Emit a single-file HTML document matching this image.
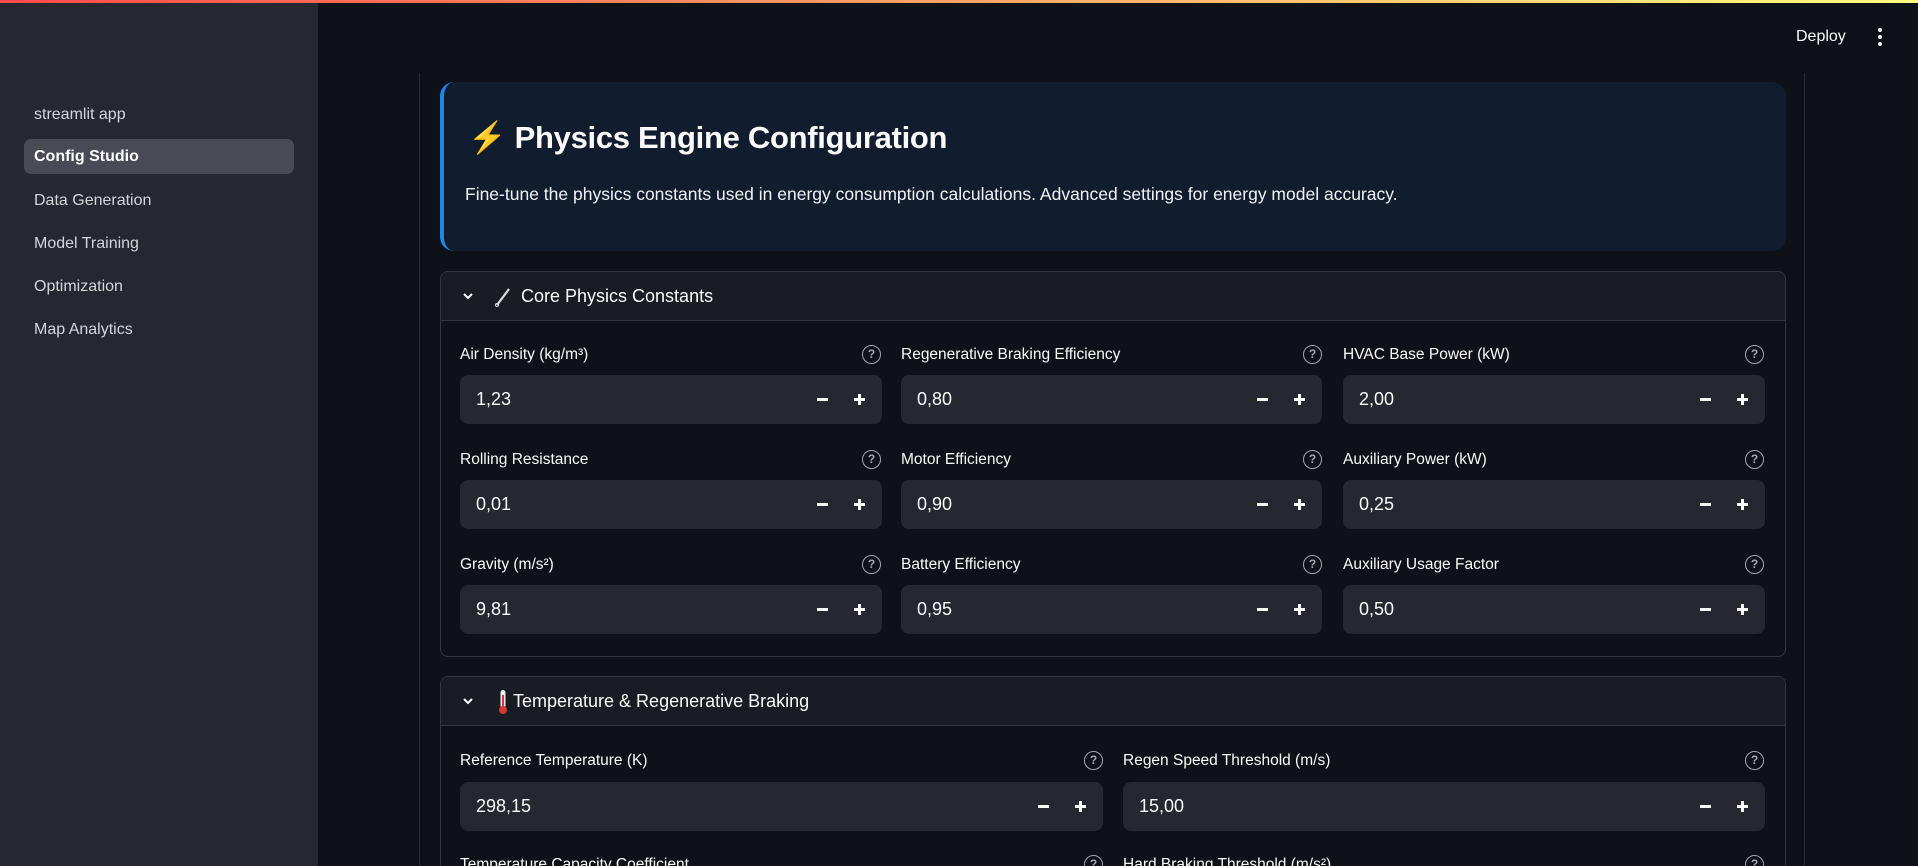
<!DOCTYPE html>
<html><head><meta charset="utf-8"><style>
*{box-sizing:border-box;margin:0;padding:0}
html,body{width:1918px;height:866px;overflow:hidden}
body{background:#0e1117;font-family:"Liberation Sans",sans-serif;color:#fafafa}
#w{position:relative;width:1918px;height:866px;overflow:hidden}
.topbar{position:absolute;left:0;top:0;width:1918px;height:3px;background:linear-gradient(90deg,#ff4b4b,#fffd80)}
.side{position:absolute;left:0;top:3px;width:318px;height:863px;background:#262730}
.nav{position:absolute;left:24px;width:270px;height:35px;line-height:35px;padding-left:10px;font-size:16px;color:#d5d6da;border-radius:7px}
.nav.act{background:#484a55;color:#fff;font-weight:bold}
.deploy{position:absolute;left:1796px;top:28px;font-size:16px}
.kebab{position:absolute;left:1878px;top:28px;width:4px}
.kebab i{display:block;width:4px;height:4px;border-radius:2px;background:#fafafa;margin-bottom:3px}
.vl{position:absolute;top:73px;width:1px;height:793px;background:#2b2d35}
.hdr{position:absolute;left:440px;top:82px;width:1346px;height:169px;background:#111d2e;border-radius:14px;border-left:4px solid #1e88e5}
.hdr h1{position:absolute;left:24px;top:37px;font-size:31px;font-weight:bold;letter-spacing:-0.3px}
.hdr p{position:absolute;left:21px;top:102px;font-size:17.5px;color:#f0f2f6}
.exp{position:absolute;left:440px;width:1346px;border:1px solid #34363e;border-radius:8px;overflow:hidden}
.exph{height:49px;background:#1a1c23;border-bottom:1px solid #34363e;position:relative;font-size:18px}
.exph span{position:absolute;left:80px;top:14px}
.chev{position:absolute;left:20px;top:17px}
.lbl{position:absolute;font-size:15.5px;color:#fafafa}
.q{position:absolute;width:19px;height:19px;border:1.5px solid #a3a8b4;border-radius:50%;font-size:12px;line-height:16px;text-align:center;color:#a3a8b4;font-weight:bold}
.inp{position:absolute;height:49px;background:#262730;border-radius:8px;font-size:18px}
.inp .v{position:absolute;left:16px;top:14px}
.inp .m{position:absolute;right:54px;top:23px;width:11px;height:2.5px;background:#fafafa}
.inp .p1{position:absolute;right:17px;top:23px;width:11px;height:2.5px;background:#fafafa}
.inp .p2{position:absolute;right:21.5px;top:18.5px;width:2.5px;height:11px;background:#fafafa}
</style></head><body><div id="w">
<div class="topbar"></div>
<div class="side">
<div class="nav" style="top:94px">streamlit app</div>
<div class="nav act" style="top:136px">Config Studio</div>
<div class="nav" style="top:180px">Data Generation</div>
<div class="nav" style="top:223px">Model Training</div>
<div class="nav" style="top:266px">Optimization</div>
<div class="nav" style="top:309px">Map Analytics</div>
</div>
<div class="deploy">Deploy</div>
<div class="kebab"><i></i><i></i><i></i></div>
<div class="vl" style="left:419px"></div>
<div class="vl" style="left:1804px"></div>
<div class="hdr"><h1><span style="color:#f6c026">⚡</span> Physics Engine Configuration</h1>
<p>Fine-tune the physics constants used in energy consumption calculations. Advanced settings for energy model accuracy.</p></div>

<div class="exp" style="top:271px;height:386px">
<div class="exph"><svg class="chev" width="14" height="14" viewBox="0 0 14 14"><path d="M3 5l4 4 4-4" stroke="#fafafa" stroke-width="2" fill="none"/></svg>
<svg style="position:absolute;left:52px;top:13px" width="22" height="22" viewBox="0 0 22 22"><path d="M4 20L16 4" stroke="#ddd" stroke-width="2.2"/><circle cx="4" cy="20" r="1.5" fill="none" stroke="#ddd" stroke-width="1"/></svg>
<span>Core Physics Constants</span></div>
</div>
<div class="exp" style="top:676px;height:220px">
<div class="exph"><svg class="chev" width="14" height="14" viewBox="0 0 14 14"><path d="M3 5l4 4 4-4" stroke="#fafafa" stroke-width="2" fill="none"/></svg>
<svg style="position:absolute;left:56px;top:12px" width="12" height="26" viewBox="0 0 12 26"><rect x="3.5" y="1" width="5" height="18" rx="2.5" fill="#eee"/><rect x="5" y="6" width="2" height="14" fill="#d33"/><circle cx="6" cy="21" r="4" fill="#d33"/></svg>
<span style="left:72px">Temperature &amp; Regenerative Braking</span></div>
</div>

<div class="lbl" style="left:460px;top:346px">Air Density (kg/m³)</div><div class="q" style="left:862px;top:345px">?</div>
<div class="inp" style="left:460px;top:375px;width:422px"><span class="v">1,23</span><i class="m"></i><i class="p1"></i><i class="p2"></i></div>
<div class="lbl" style="left:901px;top:346px">Regenerative Braking Efficiency</div><div class="q" style="left:1303px;top:345px">?</div>
<div class="inp" style="left:901px;top:375px;width:421px"><span class="v">0,80</span><i class="m"></i><i class="p1"></i><i class="p2"></i></div>
<div class="lbl" style="left:1343px;top:346px">HVAC Base Power (kW)</div><div class="q" style="left:1745px;top:345px">?</div>
<div class="inp" style="left:1343px;top:375px;width:422px"><span class="v">2,00</span><i class="m"></i><i class="p1"></i><i class="p2"></i></div>

<div class="lbl" style="left:460px;top:451px">Rolling Resistance</div><div class="q" style="left:862px;top:450px">?</div>
<div class="inp" style="left:460px;top:480px;width:422px"><span class="v">0,01</span><i class="m"></i><i class="p1"></i><i class="p2"></i></div>
<div class="lbl" style="left:901px;top:451px">Motor Efficiency</div><div class="q" style="left:1303px;top:450px">?</div>
<div class="inp" style="left:901px;top:480px;width:421px"><span class="v">0,90</span><i class="m"></i><i class="p1"></i><i class="p2"></i></div>
<div class="lbl" style="left:1343px;top:451px">Auxiliary Power (kW)</div><div class="q" style="left:1745px;top:450px">?</div>
<div class="inp" style="left:1343px;top:480px;width:422px"><span class="v">0,25</span><i class="m"></i><i class="p1"></i><i class="p2"></i></div>

<div class="lbl" style="left:460px;top:556px">Gravity (m/s²)</div><div class="q" style="left:862px;top:555px">?</div>
<div class="inp" style="left:460px;top:585px;width:422px"><span class="v">9,81</span><i class="m"></i><i class="p1"></i><i class="p2"></i></div>
<div class="lbl" style="left:901px;top:556px">Battery Efficiency</div><div class="q" style="left:1303px;top:555px">?</div>
<div class="inp" style="left:901px;top:585px;width:421px"><span class="v">0,95</span><i class="m"></i><i class="p1"></i><i class="p2"></i></div>
<div class="lbl" style="left:1343px;top:556px">Auxiliary Usage Factor</div><div class="q" style="left:1745px;top:555px">?</div>
<div class="inp" style="left:1343px;top:585px;width:422px"><span class="v">0,50</span><i class="m"></i><i class="p1"></i><i class="p2"></i></div>

<div class="lbl" style="left:460px;top:752px">Reference Temperature (K)</div><div class="q" style="left:1084px;top:751px">?</div>
<div class="inp" style="left:460px;top:782px;width:643px"><span class="v">298,15</span><i class="m"></i><i class="p1"></i><i class="p2"></i></div>
<div class="lbl" style="left:1123px;top:752px">Regen Speed Threshold (m/s)</div><div class="q" style="left:1745px;top:751px">?</div>
<div class="inp" style="left:1123px;top:782px;width:642px"><span class="v">15,00</span><i class="m"></i><i class="p1"></i><i class="p2"></i></div>
<div class="lbl" style="left:460px;top:856px">Temperature Capacity Coefficient</div><div class="q" style="left:1084px;top:855px">?</div>
<div class="lbl" style="left:1123px;top:856px">Hard Braking Threshold (m/s²)</div><div class="q" style="left:1745px;top:855px">?</div>
</div></body></html>
